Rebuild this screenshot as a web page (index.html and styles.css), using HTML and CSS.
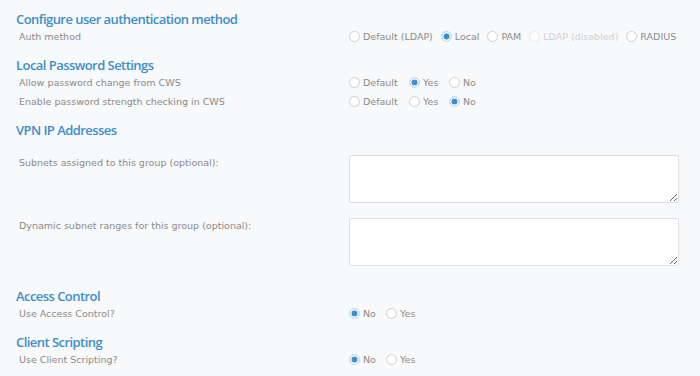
FILE: index.html
```html
<!DOCTYPE html>
<html lang="en">
<head>
  <meta charset="UTF-8">
  <title>Group settings</title>
  <link rel="stylesheet" href="styles.css">
</head>
<body>
  <div class="page">
    <section class="group">
      <h2>Configure user authentication method</h2>
      <div class="row">
        <span class="label">Auth method</span>
        <div class="options">
          <label class="radio"><input type="radio" name="auth"><span>Default (LDAP)</span></label>
          <label class="radio"><input type="radio" name="auth" checked><span>Local</span></label>
          <label class="radio"><input type="radio" name="auth"><span>PAM</span></label>
          <label class="radio disabled"><input type="radio" name="auth" disabled><span>LDAP (disabled)</span></label>
          <label class="radio"><input type="radio" name="auth"><span>RADIUS</span></label>
        </div>
      </div>
    </section>

    <section class="group">
      <h2>Local Password Settings</h2>
      <div class="row">
        <span class="label">Allow password change from CWS</span>
        <div class="options">
          <label class="radio w-default"><input type="radio" name="pwchange"><span>Default</span></label>
          <label class="radio w-yes"><input type="radio" name="pwchange" checked><span>Yes</span></label>
          <label class="radio"><input type="radio" name="pwchange"><span>No</span></label>
        </div>
      </div>
      <div class="row">
        <span class="label">Enable password strength checking in CWS</span>
        <div class="options">
          <label class="radio w-default"><input type="radio" name="pwstrength"><span>Default</span></label>
          <label class="radio w-yes"><input type="radio" name="pwstrength"><span>Yes</span></label>
          <label class="radio"><input type="radio" name="pwstrength" checked><span>No</span></label>
        </div>
      </div>
    </section>

    <section class="group">
      <h2>VPN IP Addresses</h2>
      <div class="row area-row first">
        <span class="label">Subnets assigned to this group (optional):</span>
        <textarea></textarea>
      </div>
      <div class="row area-row">
        <span class="label">Dynamic subnet ranges for this group (optional):</span>
        <textarea></textarea>
      </div>
    </section>

    <section class="group spaced">
      <h2>Access Control</h2>
      <div class="row">
        <span class="label">Use Access Control?</span>
        <div class="options">
          <label class="radio w-no"><input type="radio" name="acl" checked><span>No</span></label>
          <label class="radio"><input type="radio" name="acl"><span>Yes</span></label>
        </div>
      </div>
    </section>

    <section class="group">
      <h2>Client Scripting</h2>
      <div class="row">
        <span class="label">Use Client Scripting?</span>
        <div class="options">
          <label class="radio w-no"><input type="radio" name="script" checked><span>No</span></label>
          <label class="radio"><input type="radio" name="script"><span>Yes</span></label>
        </div>
      </div>
    </section>
  </div>
</body>
</html>
```

FILE: styles.css
```css
*, *::before, *::after { box-sizing: border-box; }
html, body {
  margin: 0; padding: 0;
  background: #f8f9fa;
  font-family: 'DejaVu Sans', 'Open Sans', sans-serif;
  color: #8a8a8a;
}
.page {
  padding: 12px 21px 0 16px;
}
.group {
  margin-bottom: 12px;
}
.group.spaced {
  margin-top: 23px;
}
h2 {
  margin: 0;
  font-family: 'Open Sans', 'DejaVu Sans', sans-serif;
  font-size: 13px;
  line-height: 15px;
  font-weight: 600;
  letter-spacing: -0.55px;
  color: #3d8ecb;
}
.row {
  display: flex;
  align-items: center;
  height: 19px;
}
.label {
  flex: 0 0 333px;
  padding-left: 3px;
  font-size: 9.5px;
  color: #8a8a8a;
  white-space: nowrap;
}
.options {
  display: flex;
  align-items: center;
  white-space: nowrap;
}
.radio {
  display: flex;
  align-items: center;
  flex-shrink: 0;
  margin-right: 8px;
  font-size: 9.5px;
  color: #8a8a8a;
}
.radio.w-default { width: 60px; margin-right: 0; }
.radio.w-yes { width: 40px; margin-right: 0; }
.radio.w-no { width: 37px; margin-right: 0; }
.radio.disabled { color: #d0d0d0; }
.radio input {
  appearance: none;
  -webkit-appearance: none;
  flex-shrink: 0;
  width: 11px;
  height: 11px;
  margin: 0 3px 0 0;
  border: 1px solid #cfcfcf;
  border-radius: 50%;
  background: #fff;
}
.radio input:checked {
  border-color: #d4e4f1;
  background: #3d8ecb;
  box-shadow: inset 0 0 0 1.5px #fff;
}
.radio input:disabled {
  border-color: #e8e8e8;
}
.area-row {
  height: auto;
  align-items: flex-start;
  margin-bottom: 15px;
}
.area-row.first {
  margin-top: 17px;
}
.area-row .label {
  padding-top: 2px;
}
textarea {
  width: 330px;
  height: 48px;
  border: 1px solid #dcdee2;
  border-radius: 2px;
  background: #fff;
  resize: vertical;
}
```
